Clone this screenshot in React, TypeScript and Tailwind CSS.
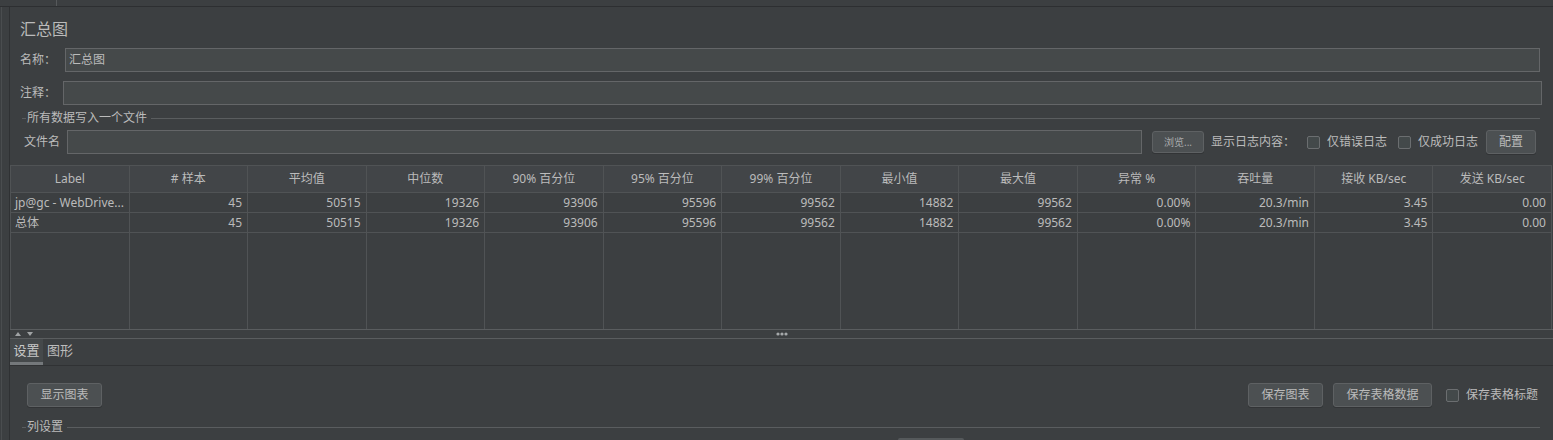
const COLS = ['Label', '# 样本', '平均值', '中位数', '90% 百分位', '95% 百分位', '99% 百分位', '最小值', '最大值', '异常 %', '吞吐量', '接收 KB/sec', '发送 KB/sec'];
const VALUES = ['45', '50515', '19326', '93906', '95596', '99562', '14882', '99562', '0.00%', '20.3/min', '3.45', '0.00'];
const ROWS = [['jp@gc - WebDrive...', ...VALUES], ['总体', ...VALUES]];

const Checkbox = () => <span className="h-[13px] w-[13px] shrink-0 rounded-[2px] border border-[#6b6e70] bg-[#43494a]" />;

const Btn = ({ label, className = '' }: { label: string; className?: string }) => (
  <button className={`flex h-[24px] shrink-0 items-center justify-center rounded-[3px] border border-[#5e6163] bg-[#4c5052] text-[12px] text-[#bbbbbb] shadow-[0_1px_0_#323436] ${className}`}>
    {label}
  </button>
);

const Legend = ({ label }: { label: string }) => (
  <div className="flex h-[14px] items-center">
    <span className="ml-[2px] h-px w-[4px] bg-[#5a5d5f]" />
    <span className="px-[1px] text-[12px] leading-[14px]">{label}</span>
    <span className="ml-[3px] mr-[13px] h-px flex-1 bg-[#5a5d5f]" />
  </div>
);

export default function App() {
  return (
    <div className="flex h-[440px] w-[1553px] flex-col overflow-hidden bg-[#3c3f41] font-['Noto_Sans','Noto_Sans_CJK_SC',sans-serif] text-[12px] text-[#bbbbbb]">
      <div className="flex h-[6px] shrink-0">
        <div className="w-[57px] border-r border-[#56595b]" />
      </div>
      <div className="h-px shrink-0 bg-[#2d2f31]" />

      <div className="flex min-h-0 flex-1">
        <div className="flex w-[10px] shrink-0">
          <div className="ml-px w-px bg-[#4a4d4f]" />
          <div className="ml-[7px] w-px bg-[#2f3133]" />
        </div>

        <div className="flex min-w-0 flex-1 flex-col">
          <div className="pl-[10px]">
            <div className="mt-[12px] h-[20px] text-[16px] leading-[20px]">汇总图</div>

            <div className="mt-[9px] flex h-[24px] items-center">
              <span className="w-[45px] shrink-0">名称：</span>
              <div className="mr-[13px] flex h-full flex-1 items-center border border-[#646668] bg-[#45494a] pl-[3px]">汇总图</div>
            </div>

            <div className="mt-[9px] flex h-[24px] items-center">
              <span className="w-[43px] shrink-0">注释：</span>
              <div className="mr-[11px] h-full flex-1 border border-[#646668] bg-[#45494a]" />
            </div>

            <div className="mt-[6px]">
              <Legend label="所有数据写入一个文件" />
            </div>

            <div className="mt-[5px] flex h-[24px] items-center">
              <span className="w-[47px] shrink-0 pl-[4px]">文件名</span>
              <div className="h-full flex-1 border border-[#646668] bg-[#45494a]" />
              <Btn label="浏览..." className="ml-[10px] !h-[22px] w-[52px] !text-[10px] !text-[#a9abad]" />
              <span className="ml-[7px] w-[96px] shrink-0">显示日志内容：</span>
              <span className="flex w-[91px] shrink-0 items-center gap-[7px]"><Checkbox />仅错误日志</span>
              <span className="flex w-[88px] shrink-0 items-center gap-[7px]"><Checkbox />仅成功日志</span>
              <Btn label="配置" className="mr-[17px] w-[50px]" />
            </div>
          </div>

          <div className="mt-[11px] mr-px flex h-[164px] shrink-0 flex-col border-l border-t border-[#505355]">
            <div className="grid h-[27px] shrink-0 grid-cols-[repeat(13,minmax(0,1fr))] bg-[#424548]">
              {COLS.map((c) => (
                <div key={c} className="flex items-center justify-center whitespace-nowrap border-b border-r border-[#505355]">{c}</div>
              ))}
            </div>
            {ROWS.map((r, i) => (
              <div key={i} className="grid h-[20px] shrink-0 grid-cols-[repeat(13,minmax(0,1fr))]">
                {r.map((v, j) => (
                  <div key={j} className={`flex items-center overflow-hidden whitespace-nowrap border-b border-r border-[#505355] ${j === 0 ? 'pl-[4px]' : 'justify-end pr-[5px]'}`}>{v}</div>
                ))}
              </div>
            ))}
            <div className="grid flex-1 grid-cols-[repeat(13,minmax(0,1fr))]">
              {COLS.map((c) => (
                <div key={c} className="border-r border-[#505355]" />
              ))}
            </div>
          </div>

          <div className="relative flex h-[10px] shrink-0 items-center border-y border-[#5a5d5f]">
            <svg width="22" height="6" viewBox="0 0 22 6" className="ml-[5px]">
              <path d="M0 5 L3 1 L6 5 Z" fill="#a0a3a5" />
              <path d="M12 1 L18 1 L15 5 Z" fill="#a0a3a5" />
            </svg>
            <svg width="12" height="4" viewBox="0 0 12 4" className="absolute left-[766px] top-[2px]">
              <circle cx="2" cy="2" r="1.6" fill="#a6a9ab" />
              <circle cx="6" cy="2" r="1.6" fill="#a6a9ab" />
              <circle cx="10" cy="2" r="1.6" fill="#a6a9ab" />
            </svg>
          </div>

          <div className="flex h-[27px] shrink-0 border-b border-[#303234]">
            <div className="flex w-[33px] flex-col bg-[#45494b]">
              <span className="flex flex-1 items-center justify-center pt-[1px] text-[13px] text-[#c8c8c8]">设置</span>
              <span className="h-[3px] bg-[#74787b]" />
            </div>
            <span className="ml-[4px] flex items-center pb-[2px] text-[13px]">图形</span>
          </div>

          <div className="mt-[17px] flex h-[24px] items-center">
            <Btn label="显示图表" className="ml-[17px] w-[75px]" />
            <div className="flex-1" />
            <Btn label="保存图表" className="w-[75px]" />
            <Btn label="保存表格数据" className="ml-[10px] w-[99px]" />
            <span className="ml-[14px] mr-[15px] flex items-center gap-[7px]"><Checkbox />保存表格标题</span>
          </div>

          <div className="mt-[13px] pl-[10px]">
            <Legend label="列设置" />
          </div>
          <div className="ml-[888px] mt-[4px] h-[3px] w-[66px] shrink-0 rounded-t-[2px] bg-[#55595b]" />
        </div>
      </div>
    </div>
  );
}
